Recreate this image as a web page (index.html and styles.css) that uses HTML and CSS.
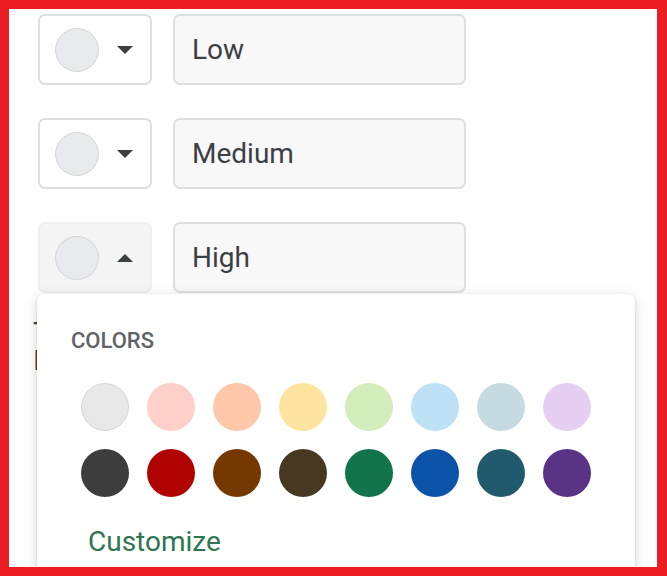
FILE: index.html
```html
<!DOCTYPE html>
<html lang="en">
<head>
<meta charset="utf-8">
<title>Dropdown chips</title>
<link rel="stylesheet" href="styles.css">
</head>
<body>
<div class="frame">
  <div class="content">
    <div class="rows">
      <div class="row">
        <div class="color-btn"><span class="swatch"></span><span class="caret caret-down"></span></div>
        <div class="text-input">Low</div>
      </div>
      <div class="row">
        <div class="color-btn"><span class="swatch"></span><span class="caret caret-down"></span></div>
        <div class="text-input">Medium</div>
      </div>
      <div class="row">
        <div class="color-btn open"><span class="swatch"></span><span class="caret caret-up"></span></div>
        <div class="text-input">High</div>
      </div>
    </div>
    <p class="behind">To<br>In</p>
  </div>

  <div class="popup">
    <div class="popup-title">COLORS</div>
    <div class="palette">
      <span class="dot first" style="background:#e8e8e8"></span>
      <span class="dot" style="background:#ffcfc9"></span>
      <span class="dot" style="background:#ffc8aa"></span>
      <span class="dot" style="background:#ffe5a0"></span>
      <span class="dot" style="background:#d4edbc"></span>
      <span class="dot" style="background:#bfe1f6"></span>
      <span class="dot" style="background:#c6dbe1"></span>
      <span class="dot" style="background:#e6cff2"></span>
      <span class="dot" style="background:#3d3d3d"></span>
      <span class="dot" style="background:#b10202"></span>
      <span class="dot" style="background:#753800"></span>
      <span class="dot" style="background:#473821"></span>
      <span class="dot" style="background:#11734b"></span>
      <span class="dot" style="background:#0a53a8"></span>
      <span class="dot" style="background:#215a6c"></span>
      <span class="dot" style="background:#5a3286"></span>
    </div>
    <div class="customize">Customize</div>
  </div>
</div>
</body>
</html>
```

FILE: styles.css
```css
* { box-sizing: border-box; }

html, body {
  margin: 0;
  padding: 0;
  background: #ffffff;
}

body {
  font-family: Roboto, "Noto Sans", Arial, sans-serif;
  color: #3c4043;
}

.frame {
  position: relative;
  width: 667px;
  height: 576px;
  border-style: solid;
  border-color: #ec1c24;
  border-width: 9px 10px 9px 9px;
  overflow: hidden;
  background: #ffffff;
}

.content {
  padding: 5px 0 0 29px;
}

.rows {
  display: flex;
  flex-direction: column;
  gap: 33px;
}

.row {
  display: flex;
  align-items: stretch;
  height: 71px;
  gap: 21px;
}

.color-btn {
  width: 114px;
  height: 71px;
  border: 2px solid #dedede;
  border-radius: 7px;
  display: flex;
  align-items: center;
  padding-left: 15px;
  gap: 18px;
  background: #ffffff;
}

.color-btn.open {
  background: #f4f4f4;
  border-color: #efefef;
}

.swatch {
  width: 44px;
  height: 44px;
  border-radius: 50%;
  background: #e8eaed;
  border: 1px solid #d4d5d8;
}

.caret {
  width: 0;
  height: 0;
  border-left: 8px solid transparent;
  border-right: 8px solid transparent;
}

.caret-down {
  border-top: 8px solid #3c4043;
  margin-top: 1px;
}

.caret-up {
  border-bottom: 8px solid #3c4043;
  margin-top: 1px;
}

.text-input {
  width: 293px;
  height: 71px;
  border: 2px solid #dedede;
  border-radius: 7px;
  background: #f8f8f8;
  padding-left: 17px;
  padding-bottom: 1px;
  display: flex;
  align-items: center;
  font-size: 28px;
  color: #3c4043;
}

.behind {
  margin: 26px 0 0 -5px;
  font-size: 28px;
  line-height: 28px;
  color: #3c4043;
}

.popup {
  position: absolute;
  left: 28px;
  top: 285px;
  width: 598px;
  height: 320px;
  background: #ffffff;
  border-radius: 7px;
  box-shadow: 0 1px 3px rgba(60, 64, 67, 0.18), 0 4px 12px 3px rgba(60, 64, 67, 0.12);
  padding-top: 34px;
}

.popup-title {
  padding-left: 34px;
  font-size: 22px;
  line-height: 26px;
  font-weight: 500;
  color: #5f6368;
}

.palette {
  margin-top: 29px;
  padding-left: 44px;
  display: grid;
  grid-template-columns: repeat(8, 48px);
  grid-auto-rows: 48px;
  gap: 18px;
}

.dot {
  width: 48px;
  height: 48px;
  border-radius: 50%;
}

.dot.first {
  border: 1px solid #d6d6d6;
}

.customize {
  margin-top: 29px;
  padding-left: 51px;
  font-size: 28px;
  line-height: 32px;
  color: #2d7650;
}
```
